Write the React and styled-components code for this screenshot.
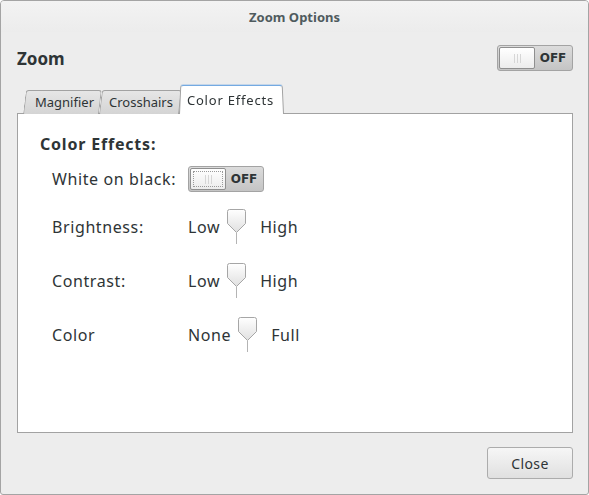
import React from 'react';
import styled, { createGlobalStyle } from 'styled-components';

const GlobalStyle = createGlobalStyle`
  html, body {
    margin: 0;
    padding: 0;
    background: #ffffff;
  }
  body {
    font-family: "Noto Sans", "Open Sans", sans-serif;
    color: #2e3436;
  }
`;

const sliders = [
  { name: 'Brightness:', low: 'Low', high: 'High' },
  { name: 'Contrast:', low: 'Low', high: 'High' },
  { name: 'Color', low: 'None', high: 'Full' },
];

const Switch = ({ focused }) => (
  <SwitchTrack>
    <SwitchKnob $focused={focused}>
      <Grip />
    </SwitchKnob>
    <SwitchLabel>OFF</SwitchLabel>
  </SwitchTrack>
);

const SliderHandle = () => (
  <HandleSvg width="19" height="35" viewBox="0 0 19 35">
    <defs>
      <linearGradient id="hg" x1="0" y1="0" x2="0" y2="1">
        <stop offset="0" stopColor="#ffffff" />
        <stop offset="1" stopColor="#e0e0e0" />
      </linearGradient>
    </defs>
    <path
      d="M2.5 0.5 H16.5 Q18.5 0.5 18.5 2.5 V14.5 L9.5 23.5 L0.5 14.5 V2.5 Q0.5 0.5 2.5 0.5 Z"
      fill="url(#hg)"
      stroke="#a6a6a6"
    />
    <line x1="9.5" y1="24" x2="9.5" y2="35" stroke="#b4b4b4" />
  </HandleSvg>
);

const App = () => {
  return (
    <>
      <GlobalStyle />
      <Window>
        <TitleBar>Zoom Options</TitleBar>
        <Body>
          <HeaderRow>
            <Heading>Zoom</Heading>
            <Switch />
          </HeaderRow>
          <TabStrip>
            <Tab $pad="0 5px 0 12px">Magnifier</Tab>
            <Tab $pad="0 6px 0 10px">Crosshairs</Tab>
            <Tab $active $pad="1px 10px 0 8px">Color Effects</Tab>
          </TabStrip>
          <Panel>
            <SectionTitle>Color Effects:</SectionTitle>
            <SwitchRow>
              <RowLabel>White on black:</RowLabel>
              <Switch focused />
            </SwitchRow>
            <SliderGroup>
              {sliders.map((s) => (
                <SliderRow key={s.name}>
                  <RowLabel>{s.name}</RowLabel>
                  <MarkLabel>{s.low}</MarkLabel>
                  <SliderHandle />
                  <MarkLabel $right>{s.high}</MarkLabel>
                </SliderRow>
              ))}
            </SliderGroup>
          </Panel>
          <Footer>
            <Button>Close</Button>
          </Footer>
        </Body>
      </Window>
    </>
  );
};

const Window = styled.div`
  width: 589px;
  height: 495px;
  box-sizing: border-box;
  border: 1px solid #a4a4a4;
  border-radius: 4px 4px 3px 3px;
  background: #ededed;
  display: flex;
  flex-direction: column;
  overflow: hidden;
`;

const TitleBar = styled.div`
  height: 31px;
  display: flex;
  align-items: center;
  justify-content: center;
  font-size: 13px;
  font-weight: bold;
  color: #4f5b5e;
  background: linear-gradient(#f3f3f3, #ececec);
`;

const Body = styled.div`
  flex: 1;
  display: flex;
  flex-direction: column;
  padding: 0 15px 0 16px;
`;

const HeaderRow = styled.div`
  display: flex;
  align-items: center;
  justify-content: space-between;
  margin-top: 13px;
`;

const Heading = styled.div`
  font-size: 17px;
  font-weight: bold;
  color: #2e3436;
`;

const SwitchTrack = styled.div`
  width: 76px;
  height: 26px;
  box-sizing: border-box;
  border: 1px solid #a3a3a3;
  border-radius: 3px;
  background: linear-gradient(#dcdcdc, #c4c4c4);
  display: flex;
  align-items: stretch;
  padding: 1px;
`;

const SwitchKnob = styled.div`
  width: 36px;
  box-sizing: border-box;
  border: 1px solid #8f8f8f;
  border-radius: 2px;
  background: linear-gradient(#ffffff, #ececec);
  display: flex;
  align-items: center;
  justify-content: center;
  position: relative;

  &::after {
    content: '';
    display: ${(p) => (p.$focused ? 'block' : 'none')};
    position: absolute;
    inset: 2px;
    border: 1px dotted #9a9a9a;
  }
`;

const Grip = styled.div`
  width: 7px;
  height: 9px;
  background: linear-gradient(
    to right,
    #d6d6d6 0 1px,
    transparent 1px 3px,
    #d6d6d6 3px 4px,
    transparent 4px 6px,
    #d6d6d6 6px 7px
  );
`;

const SwitchLabel = styled.div`
  flex: 1;
  display: flex;
  align-items: center;
  justify-content: center;
  font-family: "DejaVu Sans", sans-serif;
  font-size: 12px;
  font-weight: bold;
  color: #2e3436;
`;

const TabStrip = styled.div`
  display: flex;
  align-items: flex-end;
  margin-top: 14px;
  padding-left: 6px;
  height: 29px;
  position: relative;
  z-index: 1;
  margin-bottom: -1px;
`;

const Tab = styled.div`
  position: relative;
  height: ${(p) => (p.$active ? '29px' : '24px')};
  display: flex;
  align-items: center;
  padding: ${(p) => p.$pad};
  font-size: 13px;
  letter-spacing: ${(p) => (p.$active ? '0.8px' : '0')};
  color: #2e3436;
  z-index: ${(p) => (p.$active ? 2 : 1)};

  &::before {
    content: '';
    position: absolute;
    inset: 0;
    z-index: -1;
    box-sizing: border-box;
    border: 1px solid #a2a2a2;
    border-bottom: none;
    border-top-color: ${(p) => (p.$active ? '#4a90d9' : '#a2a2a2')};
    border-radius: 3px 3px 0 0;
    background: ${(p) =>
      p.$active ? '#ffffff' : 'linear-gradient(#e6e6e6, #d4d4d4)'};
    transform: ${(p) =>
      p.$active ? 'perspective(60px) rotateX(3deg)' : 'skewX(-7deg)'};
    transform-origin: bottom;
  }
`;

const Panel = styled.div`
  height: 320px;
  box-sizing: border-box;
  border: 1px solid #a2a2a2;
  background: #ffffff;
  padding: 20px 0 0 22px;
  display: flex;
  flex-direction: column;
`;

const SectionTitle = styled.div`
  font-size: 16px;
  font-weight: bold;
  line-height: 20px;
  letter-spacing: 0.8px;
  color: #2e3436;
`;

const SwitchRow = styled.div`
  display: flex;
  align-items: center;
  margin-top: 12px;
  padding-left: 12px;
  height: 26px;
`;

const SliderGroup = styled.div`
  display: flex;
  flex-direction: column;
  margin-top: 8px;
`;

const SliderRow = styled.div`
  display: flex;
  align-items: center;
  padding-left: 12px;
  height: 54px;
`;

const RowLabel = styled.div`
  width: 136px;
  font-size: 16px;
  letter-spacing: 0.6px;
  color: #2e3436;
`;

const MarkLabel = styled.div`
  font-size: 16px;
  letter-spacing: 0.6px;
  color: #2e3436;
  margin-left: ${(p) => (p.$right ? '14px' : '0')};
  margin-right: ${(p) => (p.$right ? '0' : '7px')};
`;

const HandleSvg = styled.svg`
  display: block;
  margin-top: -2px;
`;

const Footer = styled.div`
  display: flex;
  justify-content: flex-end;
  margin-top: 14px;
`;

const Button = styled.button`
  width: 86px;
  height: 32px;
  box-sizing: border-box;
  border: 1px solid #acacac;
  border-radius: 3px;
  background: linear-gradient(#f6f6f6, #e0e0e0);
  font-family: "Noto Sans", "Open Sans", sans-serif;
  font-size: 14px;
  letter-spacing: 0.4px;
  color: #2e3436;
`;

export default App;
